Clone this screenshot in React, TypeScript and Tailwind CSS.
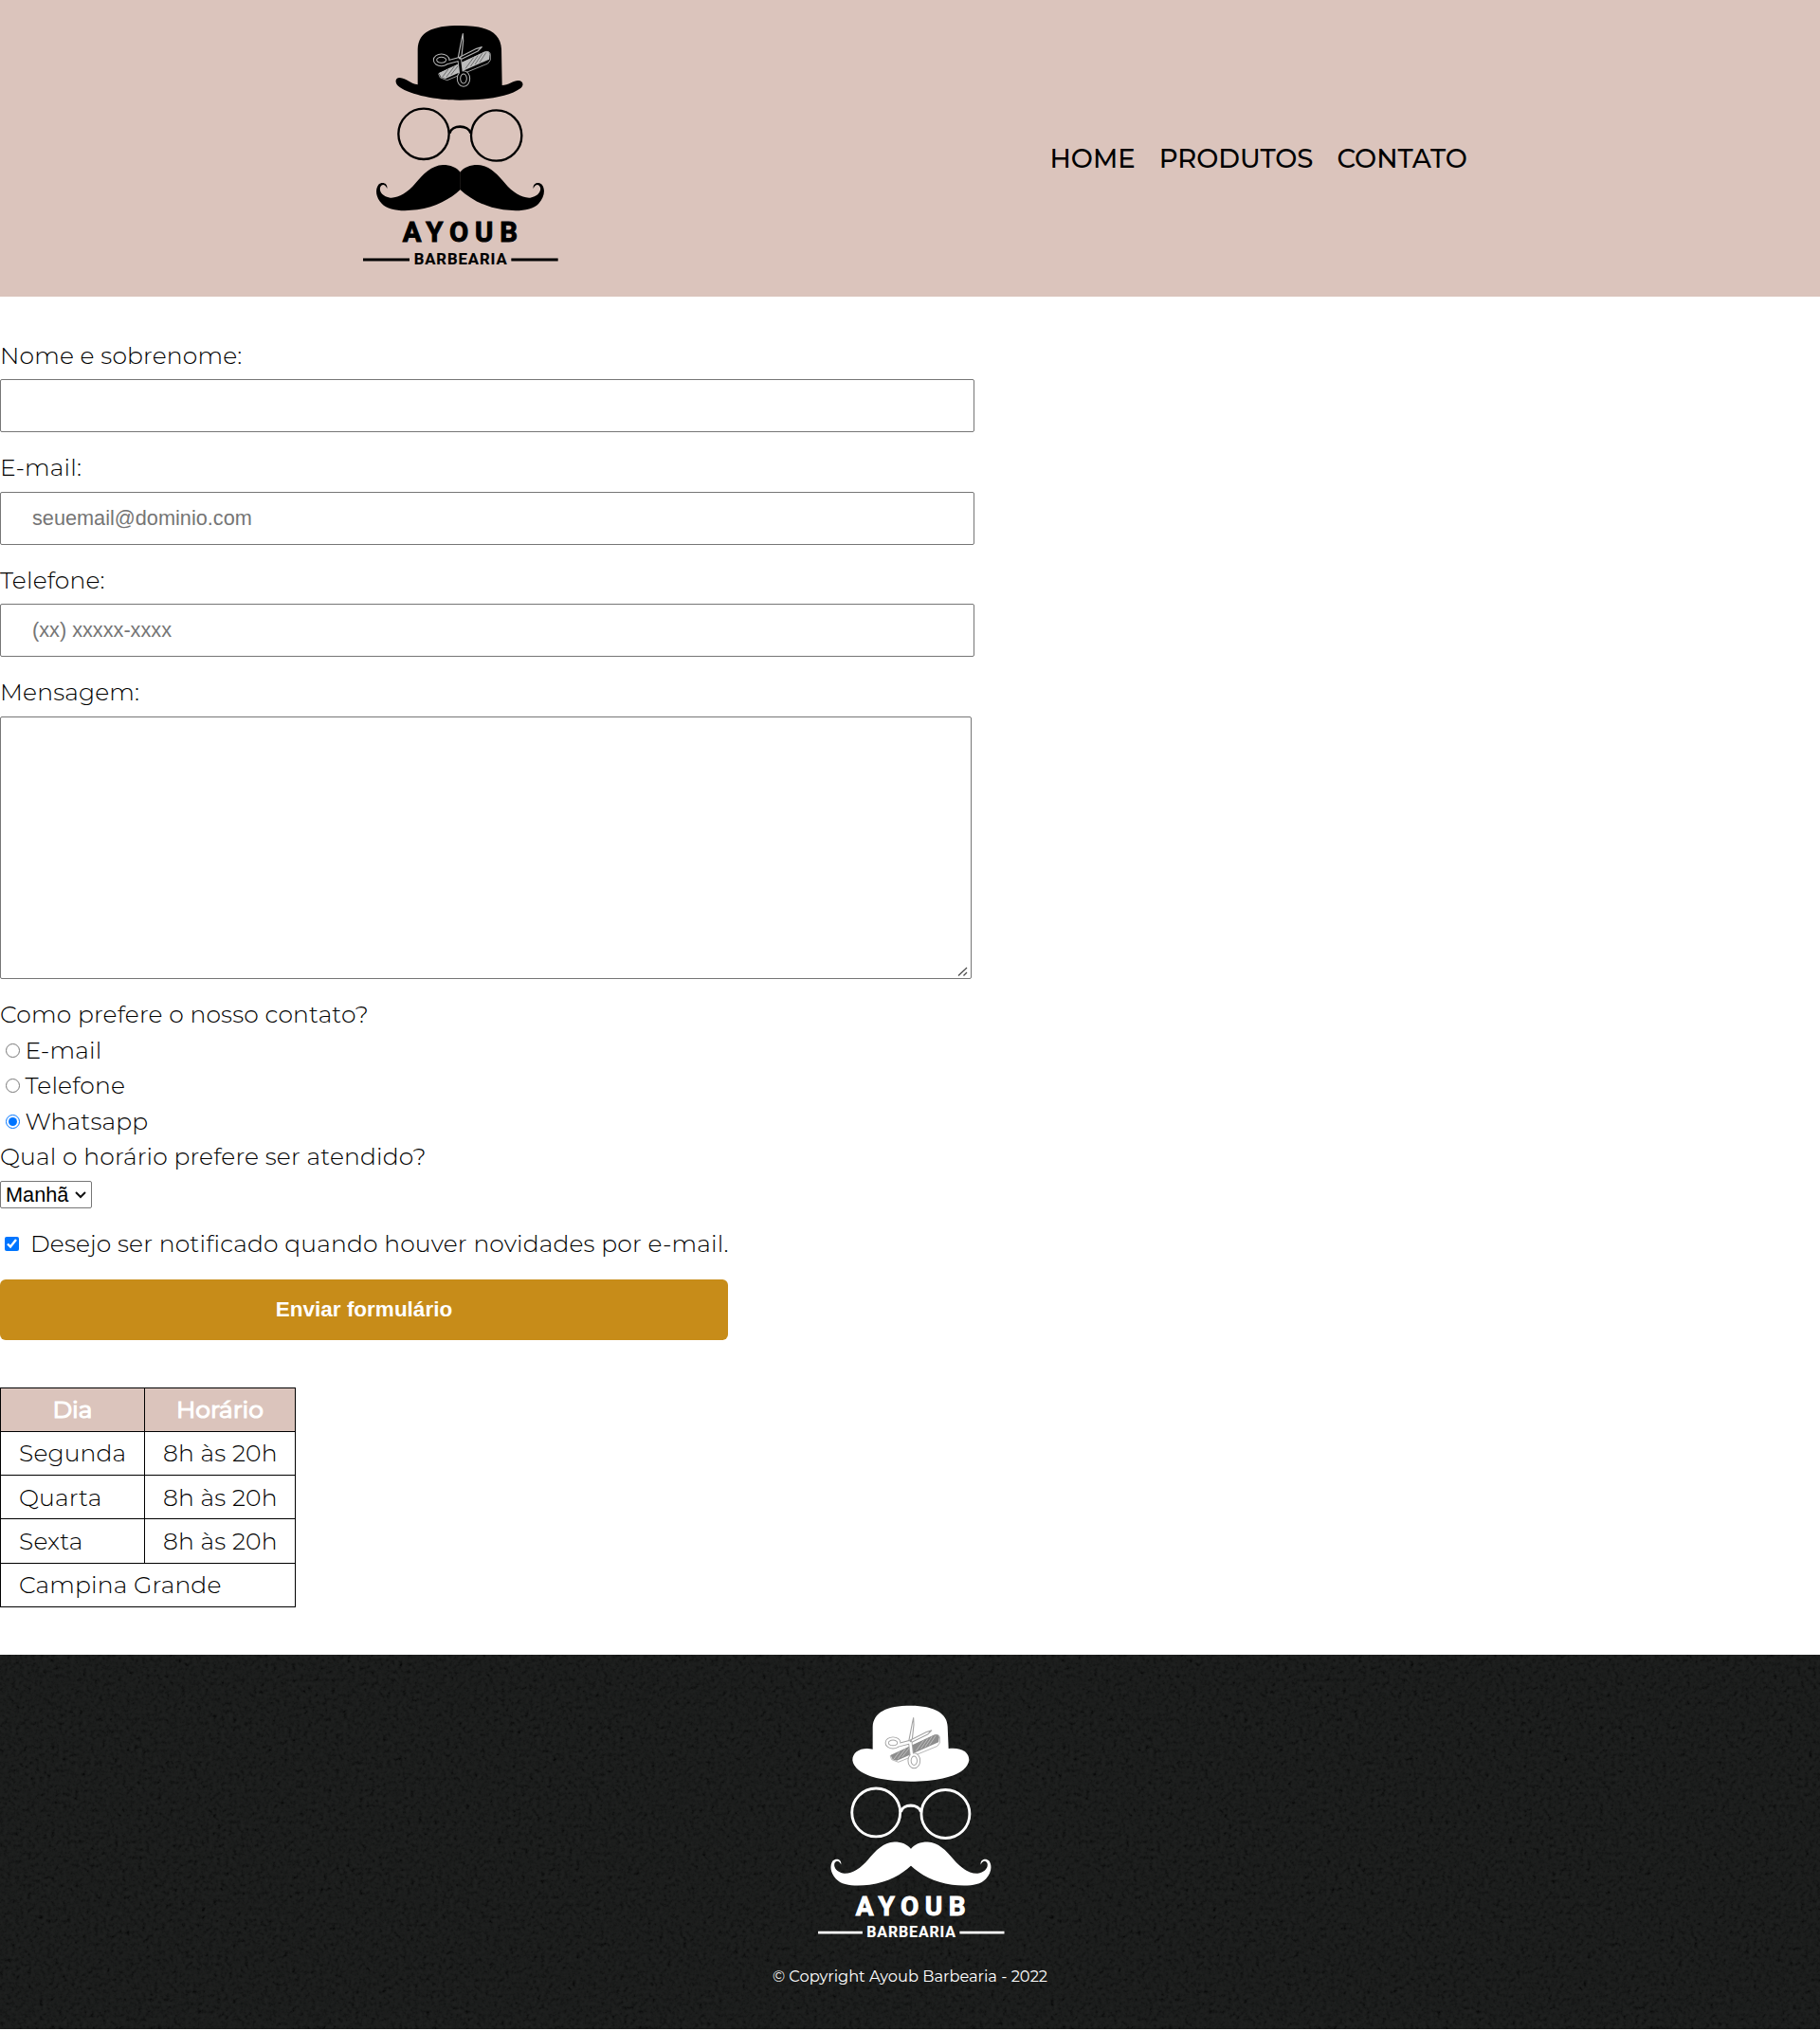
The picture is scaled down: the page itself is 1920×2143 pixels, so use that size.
import type { ReactNode } from "react";

const MOUSTACHE_HALF =
  "M347 515 C335 500 315 492 292 492 C255 494 230 520 205 550 C180 580 150 598 125 596 C103 593 90 578 93 564 C97 552 109 552 115 567 C118 549 98 544 88 554 C76 570 80 595 98 614 C120 638 165 639 210 634 C270 625 315 600 347 570 Z";

function Tools({ line, fill, bg }: { line: string; fill: string; bg: string }) {
  return (
    <g strokeLinecap="round" strokeLinejoin="round">
      <path d="M279 203 L425 134 Q440 130 442 142 L442 160 L434 171 L305 224 L284 216 Z" fill={bg} stroke={line} strokeWidth="2.5" />
      <path d="M279 201 L423 134 Q438 130 440 142 L438 158 L300 219 L286 215 Z" fill={fill} />
      <path
        d="M290 214 L308 190 M304 212 L328 180 M318 206 L344 173 M364 186 L388 153 M380 179 L402 147 M394 173 L416 140 M408 167 L428 137"
        stroke={bg}
        strokeWidth="1.3"
      />
      <g fill="none" stroke={line} strokeWidth="14">
        <path d="M306 167 L345 157 M344 156 L349 198" />
        <ellipse cx="287" cy="160" rx="20" ry="14" strokeWidth="13" />
        <ellipse cx="357" cy="219" rx="15" ry="20" strokeWidth="13" />
      </g>
      <path d="M340 152 L351 95 L355 77 L356 100 L350 156 Z" fill={bg} stroke={line} strokeWidth="3.5" />
      <path d="M342 152 L398 124 L415 119 L402 132 L345 160 Z" fill={bg} stroke={line} strokeWidth="3.5" />
      <g fill="none" stroke={bg} strokeWidth="8">
        <path d="M306 167 L345 157 M344 156 L349 198" />
        <ellipse cx="287" cy="160" rx="20" ry="14" strokeWidth="7" />
        <ellipse cx="357" cy="219" rx="15" ry="20" strokeWidth="7" />
      </g>
      <circle cx="346" cy="154" r="4" fill={line} />
    </g>
  );
}

function Face({ color, rim }: { color: string; rim: number }) {
  return (
    <g>
      <g fill="none" stroke={color} strokeWidth={rim}>
        <circle cx="231" cy="394" r="80" />
        <circle cx="461" cy="399" r="80" />
        <path d="M313 392 C320 364 372 364 380 392" strokeWidth={rim + 1} />
      </g>
      <path d={MOUSTACHE_HALF} fill={color} />
      <path d={MOUSTACHE_HALF} fill={color} transform="translate(693 0) scale(-1 1)" />
      <g fill={color} stroke={color} fontFamily="Roboto, sans-serif" fontWeight="700" letterSpacing="0">
        <text x="164" y="735" fontSize="88" strokeWidth="3" textLength="364" lengthAdjust="spacing">AYOUB</text>
        <text x="200" y="806" fontSize="50" strokeWidth="0.5" textLength="294" lengthAdjust="spacing">BARBEARIA</text>
      </g>
      <path d="M39 792 H186 M508 792 H656" stroke={color} strokeWidth="8.5" />
    </g>
  );
}

function HeaderLogo() {
  return (
    <svg viewBox="0 0 690 909" className="ml-[370px] mt-[10px] h-[303px] w-[230px] shrink-0" role="img" aria-label="Ayoub Barbearia">
      <path
        d="M212 236 V125 C215 72 255 51 345 51 C437 51 474 76 477 125 L479 240 C498 240 515 225 530 225 C546 225 549 241 538 249 C500 278 420 287 345 287 C270 287 190 270 155 246 C138 235 139 216 155 216 C176 217 190 236 212 238 Z"
        fill="#000"
      />
      <Tools line="#b5b5b5" fill="#bdbdbd" bg="#000" />
      <Face color="#000" rim={7} />
    </svg>
  );
}

function FooterLogo() {
  return (
    <svg viewBox="0 0 720 810" className="h-[270px] w-[240px]" role="img" aria-label="Ayoub Barbearia">
      <path
        d="M242 197 V125 C245 80 285 59 362 59 C440 59 478 85 479 125 L482 195 C520 190 547 205 547 232 C540 280 450 299 362 299 C270 299 185 280 178 232 C178 205 205 190 242 197 Z"
        fill="#fff"
      />
      <g transform="translate(32 24) scale(0.955)">
        <Tools line="#a3a3a3" fill="#8d8d8d" bg="#fff" />
      </g>
      <g transform="translate(32 21) scale(0.955)">
        <Face color="#fff" rim={9} />
      </g>
    </svg>
  );
}

function Field({ label, children }: { label: string; children: ReactNode }) {
  return (
    <div className="mb-[18.5px]">
      <label className="mb-[6px] block pt-[0.5px] leading-[37.5px]">{label}</label>
      {children}
    </div>
  );
}

const inputClass =
  "block h-[56px] w-[1028px] rounded-[2px] border border-[#767676] bg-white px-[33px] font-['Liberation_Sans',Arial,sans-serif] text-[21.7px] font-normal tracking-normal text-black placeholder:text-[#757575]";

const contacts = ["E-mail", "Telefone", "Whatsapp"];
const days = ["Segunda", "Quarta", "Sexta"];

export default function App() {
  return (
    <div className="min-h-[2143px] bg-white font-['Montserrat','Inter',sans-serif] text-[25px] font-light tracking-[0.16px] text-black">
      <header className="flex h-[313px] bg-[#dbc4bc]">
        <HeaderLogo />
        <nav className="ml-[507.5px] flex gap-[25px] pt-[149px] text-[27.5px] font-medium leading-[37.5px] tracking-normal">
          <a>HOME</a>
          <a>PRODUTOS</a>
          <a>CONTATO</a>
        </nav>
      </header>

      <main className="h-[1433px] pt-[43px]">
        <form>
          <Field label="Nome e sobrenome:">
            <input type="text" className={inputClass} />
          </Field>
          <Field label="E-mail:">
            <input type="email" placeholder="seuemail@dominio.com" className={inputClass} />
          </Field>
          <Field label="Telefone:">
            <input type="tel" placeholder="(xx) xxxxx-xxxx" className={inputClass} />
          </Field>
          <Field label="Mensagem:">
            <div className="relative mb-[19.5px] w-[1025px]">
              <textarea className="block h-[277px] w-full resize-none rounded-[2px] border border-[#767676] bg-white" />
              <svg viewBox="0 0 12 12" className="absolute bottom-[2px] right-[3px] h-[12px] w-[12px]" stroke="#4a4a4a" strokeWidth="1.3">
                <path d="M1 10.5 L10 2 M6.5 10.5 L10 7" />
              </svg>
            </div>
          </Field>

          <p className="leading-[37.5px]">Como prefere o nosso contato?</p>
          {contacts.map((name) => (
            <label key={name} className="flex h-[37.5px] items-center leading-[37.5px]">
              <input type="radio" name="contato" defaultChecked={name === "Whatsapp"} className="ml-[6.4px] mr-[5.1px] h-[15px] w-[15px]" />
              {name}
            </label>
          ))}
          <p className="leading-[37.5px]">Qual o horário prefere ser atendido?</p>

          <div className="relative mt-[6.5px] w-[97px]">
            <select className="block h-[29px] w-[97px] appearance-none rounded-[2px] border border-[#767676] bg-white pl-[5px] font-['Liberation_Sans',Arial,sans-serif] text-[21.7px] font-normal leading-[26px] tracking-normal">
              <option>Manhã</option>
            </select>
            <svg viewBox="0 0 12 8" className="absolute right-[6px] top-[11px] h-[8px] w-[12px]" fill="none" stroke="#111" strokeWidth="2">
              <path d="M1 1 L6 6 L11 1" />
            </svg>
          </div>

          <label className="mt-[18.5px] flex h-[37.5px] items-center leading-[37.5px]">
            <input type="checkbox" defaultChecked className="ml-[5px] mr-[12px] h-[15px] w-[15px]" />
            Desejo ser notificado quando houver novidades por e-mail.
          </label>

          <button
            type="button"
            className="mt-[18.5px] block h-[64px] w-[768px] rounded-[6px] bg-[#c78c19] font-['Liberation_Sans',Arial,sans-serif] text-[22.5px] font-bold tracking-normal text-white"
          >
            Enviar formulário
          </button>
        </form>

        <table className="mt-[50px] w-[312px] table-fixed border-collapse leading-[30px]">
          <colgroup>
            <col className="w-[152px]" />
            <col className="w-[159px]" />
          </colgroup>
          <thead>
            <tr className="h-[46.3px] bg-[#dbc4bc] tracking-normal text-white [-webkit-text-stroke:1.2px_white]">
              <th className="border border-black p-0 font-normal">Dia</th>
              <th className="border border-black p-0 font-normal">Horário</th>
            </tr>
          </thead>
          <tbody>
            {days.map((day) => (
              <tr key={day} className="h-[46.3px]">
                <td className="border border-black p-0 pl-[19px]">{day}</td>
                <td className="border border-black p-0 pl-[19px]">8h às 20h</td>
              </tr>
            ))}
            <tr className="h-[46.3px]">
              <td colSpan={2} className="border border-black p-0 pl-[19px]">
                Campina Grande
              </td>
            </tr>
          </tbody>
        </table>
      </main>

      <footer className="relative h-[395px] overflow-hidden bg-[#1b1d1c]">
        <svg className="absolute inset-0 h-full w-full" aria-hidden="true">
          <filter id="grain" x="0" y="0" width="100%" height="100%" colorInterpolationFilters="sRGB">
            <feTurbulence type="fractalNoise" baseFrequency="0.24" numOctaves="3" seed="4" />
            <feColorMatrix values="0.6 0.4 0 0 0  0.6 0.4 0 0 0  0.6 0.4 0 0 0  0 0 0 0 1" />
            <feComponentTransfer>
              <feFuncR type="table" tableValues="0.01 0.03 0.08 0.108 0.12 0.13 0.14" />
              <feFuncG type="table" tableValues="0.01 0.032 0.085 0.114 0.126 0.136 0.146" />
              <feFuncB type="table" tableValues="0.01 0.031 0.083 0.111 0.123 0.133 0.143" />
            </feComponentTransfer>
          </filter>
          <rect width="100%" height="100%" filter="url(#grain)" />
        </svg>
        <div className="relative flex flex-col items-center pt-[34px]">
          <FooterLogo />
          <p className="mt-[23px] text-[16.25px] font-normal leading-[25px] tracking-normal text-white">© Copyright Ayoub Barbearia - 2022</p>
        </div>
      </footer>
    </div>
  );
}
